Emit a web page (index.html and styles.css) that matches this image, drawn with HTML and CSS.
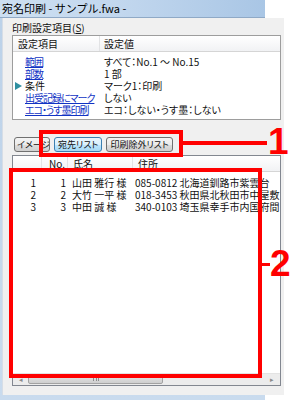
FILE: index.html
```html
<!DOCTYPE html>
<html lang="ja">
<head>
    <meta charset="UTF-8">
    <title>宛名印刷</title>
    <link rel="stylesheet" href="styles.css">
</head>
<body>
<div class="page">
    <div class="window">
        <div class="titlebar">宛名印刷 - サンプル.fwa -</div>
        <div class="frame">
            <div class="client">
                <div class="group-label">印刷設定項目(<u>S</u>)</div>

                <div class="settings">
                    <div class="settings-head">
                        <div class="key-cell">設定項目</div>
                        <div class="val-cell">設定値</div>
                    </div>
                    <div class="settings-body">
                        <div class="set-row">
                            <div class="key-cell"><span class="marker"></span><a class="link">範囲</a></div>
                            <div class="val-cell">すべて：No.1 ～ No.15</div>
                        </div>
                        <div class="set-row">
                            <div class="key-cell"><span class="marker"></span><a class="link">部数</a></div>
                            <div class="val-cell">1 部</div>
                        </div>
                        <div class="set-row">
                            <div class="key-cell"><span class="marker"><i class="arrow"></i></span><span>条件</span></div>
                            <div class="val-cell">マーク1：印刷</div>
                        </div>
                        <div class="set-row">
                            <div class="key-cell"><span class="marker"></span><a class="link">出受記録にマーク</a></div>
                            <div class="val-cell">しない</div>
                        </div>
                        <div class="set-row">
                            <div class="key-cell"><span class="marker"></span><a class="link">エコ・うす墨印刷</a></div>
                            <div class="val-cell">エコ：しない・うす墨：しない</div>
                        </div>
                    </div>
                </div>

                <div class="tabs">
                    <button class="tab tab-image">イメージ</button>
                    <button class="tab active">宛先リスト</button>
                    <button class="tab">印刷除外リスト</button>
                </div>

                <div class="list">
                    <div class="list-head">
                        <div class="c-idx"></div>
                        <div class="c-no">No.</div>
                        <div class="c-name">氏名</div>
                        <div class="c-addr">住所</div>
                    </div>
                    <div class="list-body">
                        <div class="list-row">
                            <div class="c-idx">1</div>
                            <div class="c-no">1</div>
                            <div class="c-name">山田 雅行 様</div>
                            <div class="c-addr">085-0812 北海道釧路市紫雲台</div>
                        </div>
                        <div class="list-row">
                            <div class="c-idx">2</div>
                            <div class="c-no">2</div>
                            <div class="c-name">大竹 一平 様</div>
                            <div class="c-addr">018-3453 秋田県北秋田市中屋敷</div>
                        </div>
                        <div class="list-row">
                            <div class="c-idx">3</div>
                            <div class="c-no">3</div>
                            <div class="c-name">中田 誠 様</div>
                            <div class="c-addr">340-0103 埼玉県幸手市内国府間</div>
                        </div>
                    </div>
                    <div class="hscroll">
                        <div class="sb-btn">&#9666;</div>
                        <div class="sb-thumb"><span class="grip"></span></div>
                        <div class="sb-track"></div>
                        <div class="sb-btn">&#9656;</div>
                    </div>
                </div>
            </div>
        </div>
    </div>

    <!-- callouts drawn over the screenshot -->
    <div class="callout-box box-1"></div>
    <div class="callout-line line-1"></div>
    <div class="callout-num num-1">1</div>

    <div class="callout-box box-2"></div>
    <div class="callout-line line-2"></div>
    <div class="callout-num num-2">2</div>
</div>
</body>
</html>
```

FILE: styles.css
```css
* {
    box-sizing: border-box;
    margin: 0;
    padding: 0;
}

body {
    background: #fff;
    font-family: "Noto Sans CJK JP", "Noto Sans", sans-serif;
    font-size: 10px;
    line-height: 12px;
    color: #111;
    font-feature-settings: "palt";
}

.page {
    position: relative;
    width: 290px;
    height: 400px;
    overflow: hidden;
}

.window {
    width: 265px;
    height: 400px;
    display: flex;
    flex-direction: column;
    background: #b9cfe6;
}

.titlebar {
    height: 18px;
    padding-left: 2px;
    font-size: 11px;
    line-height: 16px;
    font-feature-settings: normal;
    color: #000;
    background: linear-gradient(to right, #cddff1 0%, #c2d7ee 45%, #a9c6e5 100%);
    border-bottom: 1px solid #8fa9c6;
}

.frame {
    flex: 1;
    display: flex;
    padding: 0 0 5px 2px;
    background: linear-gradient(to bottom, #bcd2e9, #c9dbee);
}

.client {
    flex: 1;
    background: #f0f0f0;
    border-left: 1px solid #d6dde6;
    padding: 4px 3px 0 9px;
}

.group-label {
    height: 12px;
    margin-bottom: 1px;
}

/* settings grid */
.settings {
    height: 85px;
    background: #fff;
    border: 1px solid #9d9d9d;
}

.settings-head {
    display: flex;
    height: 16px;
    line-height: 15px;
    background: linear-gradient(to bottom, #ffffff, #f1f2f4);
    border-bottom: 1px solid #d5d5d5;
}

.settings-head .key-cell {
    padding-left: 5px;
    border-right: 1px solid #e2e3e5;
}

.settings-body {
    padding-top: 4px;
}

.set-row {
    display: flex;
    height: 12px;
}

.key-cell {
    width: 87px;
    flex: none;
    display: flex;
    white-space: nowrap;
}

.val-cell {
    padding-left: 4px;
    white-space: nowrap;
}

.marker {
    width: 12px;
    flex: none;
    padding: 2px 0 0 2px;
}

.arrow {
    display: block;
    width: 0;
    height: 0;
    border-left: 7px solid #2f8fa0;
    border-top: 4.5px solid transparent;
    border-bottom: 4.5px solid transparent;
}

.link {
    color: #1133c4;
    text-decoration: underline;
    letter-spacing: -1px;
}

/* tabs */
.tabs {
    display: flex;
    gap: 4px;
    margin-top: 17px;
    padding-left: 2px;
    height: 15px;
}

.tab {
    font-family: inherit;
    font-size: 9px;
    font-feature-settings: "palt";
    color: #111;
    height: 15px;
    line-height: 13px;
    padding: 0 3px;
    border: 1px solid #707070;
    border-radius: 3px;
    background: linear-gradient(to bottom, #f4f4f4 0%, #ebebeb 50%, #dddddd 51%, #cfcfcf 100%);
    white-space: nowrap;
}

.tab-image {
    width: 36px;
    padding: 0 2px;
    overflow: hidden;
}

.tab.active {
    border-color: #3c7fb1;
    background: linear-gradient(to bottom, #eaf6fd 0%, #d9f0fc 50%, #bee6fd 51%, #a7d9f5 100%);
}

/* address list */
.list {
    margin-top: 3px;
    height: 231px;
    background: #fff;
    border: 1px solid #828790;
    display: flex;
    flex-direction: column;
}

.list-head,
.list-row {
    display: flex;
    white-space: nowrap;
}

.list-head {
    height: 16px;
    line-height: 15px;
    background: linear-gradient(to bottom, #ffffff, #f1f2f4);
    border-bottom: 1px solid #d5d5d5;
}

.list-head > div {
    border-right: 1px solid #e2e3e5;
}

.list-head .c-addr {
    border-right: none;
}

.list-body {
    flex: 1;
    padding-top: 5px;
    overflow: hidden;
}

.list-row {
    height: 12px;
}

.c-idx {
    width: 29px;
    flex: none;
    text-align: right;
    padding-right: 6px;
}

.c-no {
    width: 26px;
    flex: none;
    text-align: right;
    padding-right: 2px;
}

.c-name {
    width: 65px;
    flex: none;
    padding-left: 4px;
}

.c-addr {
    flex: 1;
    padding-left: 2px;
    overflow: hidden;
}

.list-head .c-name {
    padding-left: 5px;
}

.list-head .c-addr {
    padding-left: 5px;
}

.hscroll {
    height: 12px;
    display: flex;
    background: #ececec;
    border-top: 1px solid #e3e3e3;
}

.sb-btn {
    width: 15px;
    font-size: 7px;
    line-height: 11px;
    text-align: center;
    color: #8a8a8a;
}

.sb-thumb {
    width: 135px;
    margin: 0 0 1px;
    border: 1px solid #a2a2a2;
    border-radius: 2px;
    background: linear-gradient(to bottom, #f0f0f0, #dadada 50%, #cfcfcf);
    display: flex;
    justify-content: center;
    align-items: center;
}

.grip {
    width: 6px;
    height: 4px;
    border-left: 1px solid #8c8c8c;
    border-right: 1px solid #8c8c8c;
    background: linear-gradient(to right, transparent 2px, #8c8c8c 2px, #8c8c8c 3px, transparent 3px);
}

.sb-track {
    flex: 1;
}

/* red annotation overlays */
.callout-box {
    position: absolute;
    border: 4px solid #ff0000;
}

.box-1 {
    left: 39px;
    top: 130px;
    width: 144px;
    height: 27px;
}

.box-2 {
    left: 9px;
    top: 168px;
    width: 253px;
    height: 210px;
}

.callout-line {
    position: absolute;
    height: 4px;
    background: #ff0000;
}

.line-1 {
    left: 183px;
    top: 141px;
    width: 84px;
}

.line-2 {
    left: 261px;
    top: 263px;
    width: 9px;
    height: 3px;
}

.callout-num {
    position: absolute;
    font-family: "Liberation Sans", Arial, sans-serif;
    font-weight: bold;
    font-size: 37px;
    line-height: 37px;
    color: #ff0000;
}

.num-1 {
    left: 268px;
    top: 123px;
}

.num-2 {
    left: 270px;
    top: 245px;
}
```
